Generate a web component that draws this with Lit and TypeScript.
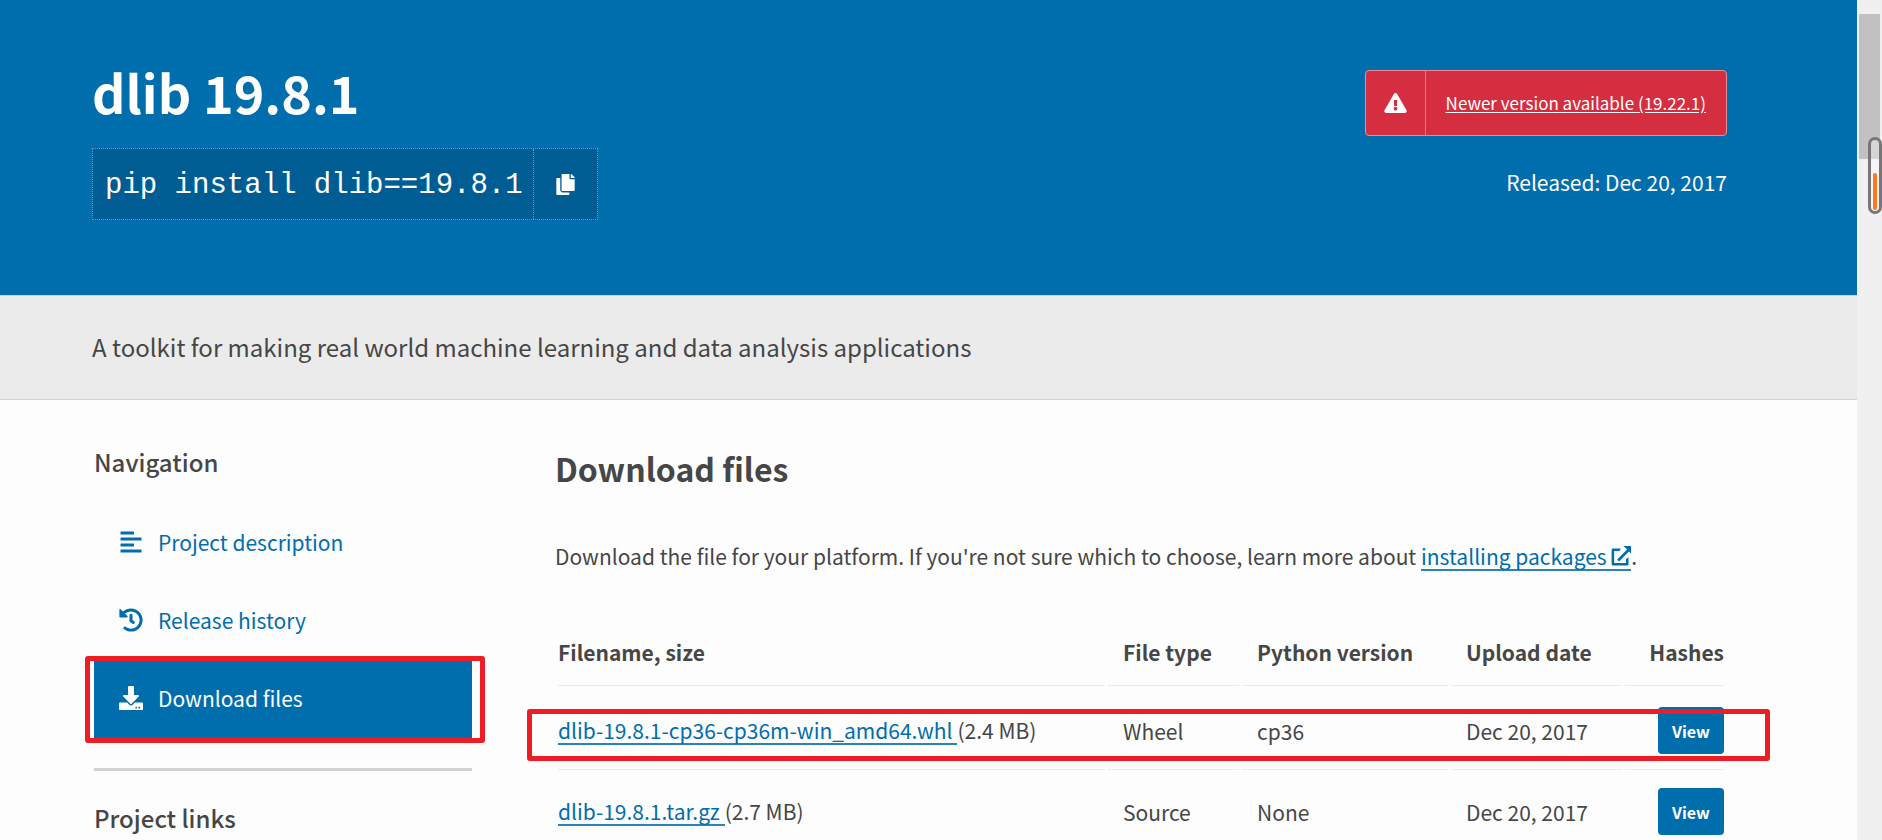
import { LitElement, html, css, svg } from "lit";
import { customElement } from "lit/decorators.js";
import { classMap } from "lit/directives/class-map.js";

const icons = {
  copy: {
    box: "0 0 448 512",
    body: svg`<path d="M320 448v40c0 13.255-10.745 24-24 24H24c-13.255 0-24-10.745-24-24V120c0-13.255 10.745-24 24-24h72v296c0 30.879 25.121 56 56 56h168zm0-344V0H152c-13.255 0-24 10.745-24 24v368c0 13.255 10.745 24 24 24h272c13.255 0 24-10.745 24-24V128H344c-13.2 0-24-10.8-24-24zm120.971-31.029L375.029 7.029A24 24 0 0 0 358.059 0H352v96h96v-6.059a24 24 0 0 0-7.029-16.97z"/>`,
  },
  warning: {
    box: "0 0 576 512",
    body: svg`<path d="M569.517 440.013C587.975 472.007 564.806 512 527.94 512H48.054c-36.937 0-59.999-40.055-41.577-71.987L246.423 23.985c18.467-32.009 64.72-31.951 83.154 0l239.94 416.028zM288 354c-25.405 0-46 20.595-46 46s20.595 46 46 46 46-20.595 46-46-20.595-46-46-46zm-43.673-165.346l7.418 136c.347 6.364 5.609 11.346 11.982 11.346h48.546c6.373 0 11.635-4.982 11.982-11.346l7.418-136c.375-6.874-5.098-12.654-11.982-12.654h-63.383c-6.884 0-12.356 5.78-11.981 12.654z"/>`,
  },
  lines: {
    box: "0 0 512 512",
    body: svg`<path d="M44 32h264q12 0 12 12v40q0 12-12 12H44q-12 0-12-12V44q0-12 12-12zM44 160h424q12 0 12 12v40q0 12-12 12H44q-12 0-12-12v-40q0-12 12-12zM44 288h264q12 0 12 12v40q0 12-12 12H44q-12 0-12-12v-40q0-12 12-12zM44 416h424q12 0 12 12v40q0 12-12 12H44q-12 0-12-12v-40q0-12 12-12z"/>`,
  },
  history: {
    box: "0 0 512 512",
    body: svg`<path d="M504 255.531c.253 136.64-111.18 248.372-247.82 248.468-59.015.042-113.223-20.53-155.822-54.911-11.077-8.94-11.905-25.541-1.839-35.607l11.267-11.267c8.609-8.609 22.353-9.551 31.891-1.984C173.062 425.135 212.781 440 256 440c101.705 0 184-82.311 184-184 0-101.705-82.311-184-184-184-48.814 0-93.149 18.969-126.068 49.932l50.754 50.754c10.08 10.08 2.941 27.314-11.313 27.314H24c-8.837 0-16-7.163-16-16V38.627c0-14.254 17.234-21.393 27.314-11.314l49.372 49.372C129.209 34.136 189.552 8 256 8c136.81 0 247.747 110.78 248 247.531zm-180.912 78.784l9.823-12.63c8.138-10.463 6.253-25.542-4.21-33.679L288 256.349V152c0-13.255-10.745-24-24-24h-16c-13.255 0-24 10.745-24 24v135.651l65.409 50.874c10.463 8.137 25.541 6.253 33.679-4.21z"/>`,
  },
  download: {
    box: "0 0 512 512",
    body: svg`<path d="M216 0h80c13.3 0 24 10.7 24 24v168h87.7c17.8 0 26.7 21.5 14.1 34.1L269.7 378.3c-7.5 7.5-19.8 7.5-27.3 0L90.1 226.1c-12.6-12.6-3.7-34.1 14.1-34.1H192V24c0-13.3 10.7-24 24-24zm296 376v112c0 13.3-10.7 24-24 24H24c-13.3 0-24-10.7-24-24V376c0-13.3 10.7-24 24-24h146.7l49 49c20.1 20.1 52.5 20.1 72.6 0l49-49H488c13.3 0 24 10.7 24 24zm-124 88c0-11-9-20-20-20s-20 9-20 20 9 20 20 20 20-9 20-20zm64 0c0-11-9-20-20-20s-20 9-20 20 9 20 20 20 20-9 20-20z"/>`,
  },
  external: {
    box: "0 0 512 512",
    body: svg`<path d="M250 64H48Q16 64 16 96v368q0 32 32 32h368q32 0 32-32V290l-64 40v102H80V128h140zM320 0h176q16 0 16 16v176l-52-52-254 254-48-48 254-254-92-92z"/>`,
  },
};

const icon = (name: keyof typeof icons, cls: string) => html`
  <svg class=${cls} viewBox=${icons[name].box} fill="currentColor" aria-hidden="true">${icons[name].body}</svg>`;

const navItems: { icon: keyof typeof icons; label: string; active?: boolean }[] = [
  { icon: "lines", label: "Project description" },
  { icon: "history", label: "Release history" },
  { icon: "download", label: "Download files", active: true },
];

const files = [
  { name: "dlib-19.8.1-cp36-cp36m-win_amd64.whl", size: "(2.4 MB)", type: "Wheel", python: "cp36", date: "Dec 20, 2017", marked: true },
  { name: "dlib-19.8.1.tar.gz", size: "(2.7 MB)", type: "Source", python: "None", date: "Dec 20, 2017", marked: false },
];

@customElement("app-root")
export class AppRoot extends LitElement {
  static styles = css`
    :host {
      display: grid;
      grid-template-columns: minmax(0, 1fr) 25px;
      position: relative;
      height: 100vh;
      overflow: hidden;
      background: #fdfdfd;
      color: #464646;
      font-family: "Noto Sans CJK SC", "Open Sans", sans-serif;
      font-size: 21px;
      line-height: 32px;
    }
    * { box-sizing: border-box; }
    h1, h2, h3, p, ul { margin: 0; padding: 0; }
    .page { min-width: 0; }

    .banner {
      display: flex;
      justify-content: space-between;
      align-items: flex-start;
      padding: 56px 130px 75px 92px;
      background: #006dad;
      color: #fff;
    }
    .title { font-size: 52px; line-height: 72px; font-weight: 600; }
    .pip {
      display: flex;
      margin-top: 20px;
      border: 1px dotted #5a9dc6;
      background: #005d93;
    }
    .command {
      padding: 4px 10px 0 12px;
      font-family: "Liberation Mono", monospace;
      font-size: 29px;
      line-height: 66px;
      white-space: nowrap;
    }
    .copy {
      display: flex;
      align-items: center;
      justify-content: center;
      width: 64px;
      border: 0;
      border-left: 1px dotted #5a9dc6;
      background: none;
      color: #fff;
      padding: 0;
    }
    .copy-icon { width: 19px; height: 21px; }
    .status {
      display: flex;
      flex-direction: column;
      align-items: flex-end;
      gap: 30px;
      padding-top: 14px;
    }
    .alert {
      display: flex;
      align-items: stretch;
      border: 1px solid #e88b97;
      border-radius: 4px;
      background: #d42e40;
      color: #fff;
      font-size: 17px;
      line-height: 64px;
    }
    .alert-sign {
      display: flex;
      align-items: center;
      padding: 0 18px;
      border-right: 1px solid #e3808c;
    }
    .warning-icon { width: 23px; height: 20px; }
    .alert-text { padding: 0 20px; }
    .alert-link { color: #fff; text-underline-offset: 2px; }

    .summary {
      padding: 32px 130px 34px 92px;
      border-top: 1px solid #d2d2d2;
      border-bottom: 1px solid #d2d2d2;
      background: #ebebeb;
      font-size: 24px;
      line-height: 37px;
    }

    .columns {
      display: grid;
      grid-template-columns: 378px minmax(0, 1fr);
      column-gap: 83px;
      padding: 43px 130px 0 94px;
    }
    .side-title { font-size: 24px; line-height: 38px; font-weight: 500; }
    .nav-list { list-style: none; margin-top: 23px; }
    .nav-item { position: relative; }
    .nav-link {
      display: flex;
      align-items: center;
      gap: 15px;
      height: 78px;
      padding: 0 0 2px 25px;
      color: #006dad;
      text-decoration: none;
    }
    .nav-link.active { background: #006dad; color: #fff; }
    .nav-icon { width: 24px; height: 24px; }
    .mark {
      position: absolute;
      inset: -4px -13px -5px -9px;
      border: 5px solid #ee1c24;
      border-radius: 3px;
      pointer-events: none;
    }
    .rule { margin: 30px 0 28px; border: 0; border-top: 3px solid #d2d2d2; }

    .main-title { font-size: 32px; line-height: 50px; font-weight: 600; }
    .intro { margin-top: 47px; line-height: 32px; }
    .link {
      display: inline-block;
      line-height: 26px;
      color: #006dad;
      text-decoration: none;
      border-bottom: 2px solid #2a84ba;
    }
    .external-icon { width: 20px; height: 20px; vertical-align: -1px; }

    .files {
      width: 100%;
      margin-top: 63px;
      table-layout: fixed;
      border-spacing: 3px;
      line-height: 28px;
    }
    .files th {
      padding: 0 0 19px 15px;
      border-bottom: 1px solid #ebebeb;
      text-align: left;
      font-weight: 600;
    }
    .files td { padding: 18px 0 12px 15px; white-space: nowrap; }
    .files .name { padding-left: 0; }
    .files tbody tr { position: relative; }
    .files tbody tr + tr td { border-top: 1px solid #ebebeb; }
    .files .hashes { padding-left: 0; text-align: right; }
    .c-type { width: 131px; }
    .c-python { width: 206px; }
    .c-date { width: 171px; }
    .c-hash { width: 99px; }
    .file-link { padding-right: 5px; }
    .view {
      display: block;
      width: 66px;
      height: 47px;
      margin-left: auto;
      padding: 0;
      border: 0;
      border-radius: 4px;
      background: #006dad;
      color: #fff;
      font: 600 16px/24px "Noto Sans CJK SC", "Open Sans", sans-serif;
    }
    .row-mark { inset: 20px -46px 5px -31px; }

    .scrollbar {
      display: flex;
      flex-direction: column;
      justify-content: space-between;
      align-items: center;
      padding-top: 14px;
      background: #f0f0f0;
    }
    .thumb { width: 21px; height: 145px; background: #c1c1c1; }
    .arrow { width: 11px; height: 3px; background: #505050; clip-path: polygon(0 0, 100% 0, 73% 100%, 27% 100%); }
    .gauge {
      position: absolute;
      top: 137px;
      right: 0;
      display: flex;
      align-items: flex-end;
      width: 14px;
      height: 77px;
      padding: 1px 2px;
      border: 3px solid #777;
      border-radius: 7px;
      background: rgba(255, 255, 255, 0.35);
    }
    .gauge-fill { width: 4px; height: 37px; border-radius: 2px; background: #ff781e; }
  `;

  render() {
    return html`
      <div class="page">
        <header class="banner">
          <div>
            <h1 class="title">dlib 19.8.1</h1>
            <div class="pip">
              <span class="command">pip install dlib==19.8.1</span>
              <button class="copy" type="button" aria-label="Copy">${icon("copy", "copy-icon")}</button>
            </div>
          </div>
          <div class="status">
            <div class="alert">
              <span class="alert-sign">${icon("warning", "warning-icon")}</span>
              <span class="alert-text"><a class="alert-link" href="#">Newer version available (19.22.1)</a></span>
            </div>
            <p>Released: Dec 20, 2017</p>
          </div>
        </header>
        <p class="summary">A toolkit for making real world machine learning and data analysis applications</p>
        <div class="columns">
          <nav>
            <h3 class="side-title">Navigation</h3>
            <ul class="nav-list">
              ${navItems.map((item) => html`
                <li class="nav-item">
                  <a href="#" class=${classMap({ "nav-link": true, active: !!item.active })}>
                    ${icon(item.icon, "nav-icon")}<span>${item.label}</span>
                  </a>
                  ${item.active ? html`<div class="mark"></div>` : null}
                </li>`)}
            </ul>
            <hr class="rule" />
            <h3 class="side-title">Project links</h3>
          </nav>
          <main>
            <h2 class="main-title">Download files</h2>
            <p class="intro">Download the file for your platform. If you're not sure which to choose, learn more about <a class="link" href="#">installing packages ${icon("external", "external-icon")}</a>.</p>
            <table class="files">
              <colgroup>
                <col /><col class="c-type" /><col class="c-python" /><col class="c-date" /><col class="c-hash" />
              </colgroup>
              <thead>
                <tr>
                  <th class="name">Filename, size</th>
                  <th>File type</th>
                  <th>Python version</th>
                  <th>Upload date</th>
                  <th class="hashes">Hashes</th>
                </tr>
              </thead>
              <tbody>
                ${files.map((f) => html`
                  <tr>
                    <td class="name"><a class="link file-link" href="#">${f.name}</a>${f.size}${f.marked ? html`<div class="mark row-mark"></div>` : null}</td>
                    <td>${f.type}</td>
                    <td>${f.python}</td>
                    <td>${f.date}</td>
                    <td class="hashes"><button class="view" type="button">View</button></td>
                  </tr>`)}
              </tbody>
            </table>
          </main>
        </div>
      </div>
      <div class="scrollbar"><div class="thumb"></div><div class="arrow"></div></div>
      <div class="gauge"><div class="gauge-fill"></div></div>
    `;
  }
}
